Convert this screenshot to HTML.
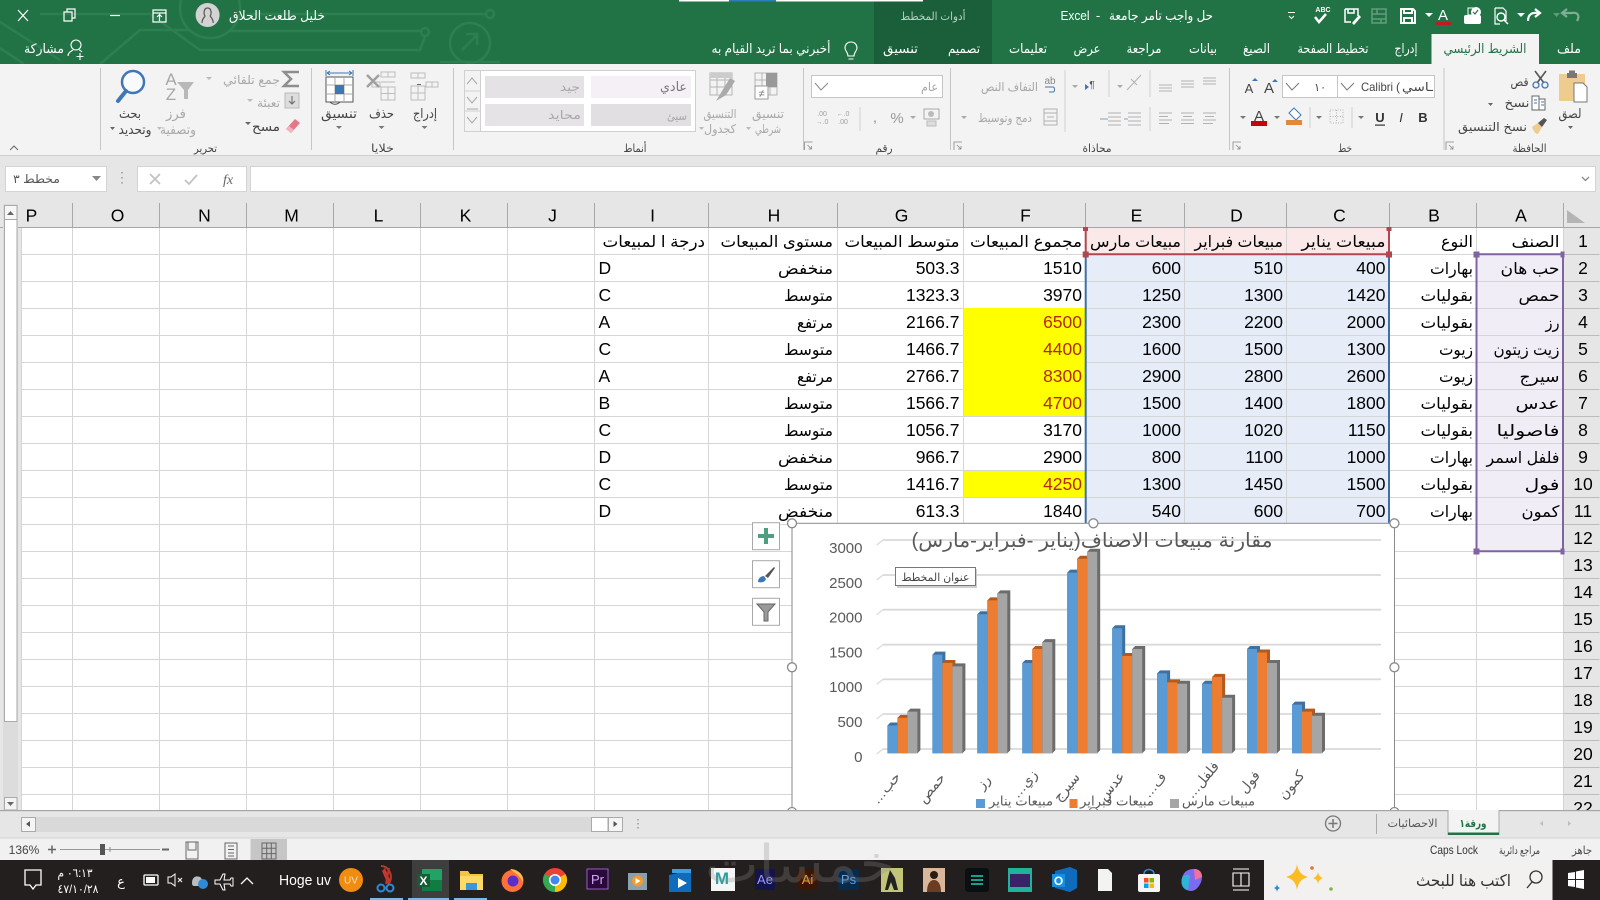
<!DOCTYPE html>
<html lang="ar"><head><meta charset="utf-8"><title>Excel</title>
<style>
html,body{margin:0;padding:0;width:1600px;height:900px;overflow:hidden;background:#e6e6e6}
svg{display:block;position:absolute;left:0;top:0}
text{font-family:"Liberation Sans","DejaVu Sans",sans-serif;fill:#000}
.m{text-anchor:middle}.e{text-anchor:end}
.w{fill:#fff}.g{fill:#a8a8a8}.d{fill:#444}
.s10{font-size:10px}.s11{font-size:11px}.s12{font-size:12px}.s13{font-size:13px}.s14{font-size:14px}.s15{font-size:15px}.s16{font-size:16px}
.n{font-size:17.5px}.a{font-size:16px}
</style></head><body>
<svg width="1600" height="900" viewBox="0 0 1600 900" xmlns="http://www.w3.org/2000/svg">
<!-- title bar -->
<rect width="1600" height="64" fill="#217346"/>
<g fill="none" stroke="#2c7f51" stroke-width="2.5">
<circle cx="210" cy="8" r="30"/><circle cx="470" cy="43" r="20"/><path d="M462 50l15-15M466 34h11v11"/>
<circle cx="490" cy="14" r="4"/><circle cx="425" cy="32" r="4"/>
<path d="M0 22L60 60M0 48L24 64M40 14H150L200 50H420L425 36M250 14H486M230 31H421M100 64L140 30H190M440 62H500"/>
</g>
<rect x="874" width="118" height="64" fill="#1a5f39"/>
<rect x="679" width="50" height="1.5" fill="#fff"/><rect x="729" width="47" height="1.5" fill="#2b7cb9"/><rect x="776" width="147" height="1.5" fill="#fff"/>
<g stroke="#fff" fill="none" stroke-width="1.2">
<path d="M18 10l10 11M28 10L18 21"/><path d="M64 12h8v9h-8zM67 12V9h8v9h-3"/><path d="M110 15.5h10"/><path d="M153 10h13v12h-13zM153 13h13M159.500 21v-6M157 17l2.500-2.500 2.500 2.500"/>
</g>
<circle cx="207.600" cy="15" r="12" fill="#d3d3d3"/><path d="M202 23c0-5 3-6 3-7-1.500-2-1.500-8 2.600-8s4 6 2.600 8c0 1 3 2 3 7" fill="none" stroke="#555" stroke-width="1.200"/>
<text x="277" y="20" class="m s13 w" textLength="96" lengthAdjust="spacingAndGlyphs">خليل طلعت الحلاق</text>
<text x="933" y="20" class="m s11" style="fill:#b6d3c3" textLength="65" lengthAdjust="spacingAndGlyphs">أدوات المخطط</text>
<text x="1075" y="20" class="m s13 w" textLength="29" lengthAdjust="spacingAndGlyphs">Excel</text><text x="1098" y="20" class="m s13 w">-</text>
<text x="1161" y="20" class="m s13 w" textLength="104" lengthAdjust="spacingAndGlyphs">حل واجب تامر جامعة</text>
<!-- QAT -->
<g fill="none" stroke="#fff" stroke-width="1.500">
<path d="M1288 12.500h7M1289 16l2.500 2.500 2.500-2.500" stroke-width="1"/>
<path d="M1315 17l4 5 7-8" stroke-width="2.500"/>
<path d="M1345 9h13v7M1345 9v13h6M1348 9v4h6V9"/><path d="M1352 23l7-8 2 2-7 8z" fill="#fff" stroke="none"/>
<g opacity=".3"><path d="M1372 9h14v14h-14zM1372 14h14M1372 19h14M1377 9v5M1381 19v4"/></g>
<path d="M1401 9h12l2 2v12h-14zM1404 9v4h8V9M1404 23v-5h8v5" stroke-width="2"/>
<path d="M1495 8h8l3 3v10M1495 8v16h5M1495 8" stroke-width="1.200"/><circle cx="1501" cy="17" r="4" stroke-width="1.400"/><path d="M1504 20l4 4"/>
<path d="M1528 21c0-7 4-9 12-8M1535 9l5 4-5 4" stroke-width="2.200"/>
<path d="M1577 21c3-5 1-9-5-8h-9M1567 9l-5 4 5 4" stroke="#7fae94" stroke-width="2.200"/>
</g>
<text x="1323" y="12" class="m" style="font-size:7px;font-weight:bold;fill:#fff">ABC</text>
<path d="M1425 13h8l-4 4zM1517 13h8l-4 4z" fill="#fff"/><path d="M1553 13h7l-3.500 4z" fill="#5f9a7c"/>
<text x="1443" y="20" class="m" style="font-size:15px;fill:#fff">A</text><rect x="1436" y="22" width="15" height="3" rx="1" fill="#c8171f"/>
<rect x="1464" y="15" width="17" height="9" rx="2" fill="#fff"/><rect x="1468" y="8" width="9" height="7" fill="none" stroke="#fff"/><circle cx="1476" cy="12" r="5" fill="#fff"/><path d="M1473 12l2 2 3-4" stroke="#217346" fill="none" stroke-width="1.200"/>
<!-- tabs -->
<rect x="1431.500" y="34" width="107.500" height="30" fill="#f3f3f3"/>
<g class="s12">
<text x="1569" y="53" class="m s13 w" textLength="24" lengthAdjust="spacingAndGlyphs">ملف</text>
<text x="1485" y="53" class="m s13" style="fill:#217346" textLength="83" lengthAdjust="spacingAndGlyphs">الشريط الرئيسي</text>
<text x="1406" y="53" class="m s13 w" textLength="23" lengthAdjust="spacingAndGlyphs">إدراج</text>
<text x="1333" y="53" class="m s13 w" textLength="71" lengthAdjust="spacingAndGlyphs">تخطيط الصفحة</text>
<text x="1256.500" y="53" class="m s13 w" textLength="27" lengthAdjust="spacingAndGlyphs">الصيغ</text>
<text x="1203" y="53" class="m s13 w" textLength="28" lengthAdjust="spacingAndGlyphs">بيانات</text>
<text x="1144" y="53" class="m s13 w" textLength="35" lengthAdjust="spacingAndGlyphs">مراجعة</text>
<text x="1087" y="53" class="m s13 w" textLength="27" lengthAdjust="spacingAndGlyphs">عرض</text>
<text x="1028" y="53" class="m s13 w" textLength="38" lengthAdjust="spacingAndGlyphs">تعليمات</text>
<text x="964" y="53" class="m s13 w" textLength="32" lengthAdjust="spacingAndGlyphs">تصميم</text>
<text x="900.500" y="53" class="m s13 w" textLength="35" lengthAdjust="spacingAndGlyphs">تنسيق</text>
<text x="771" y="53" class="m s13 w" textLength="119" lengthAdjust="spacingAndGlyphs">أخبرني بما تريد القيام به</text>
<text x="44" y="53" class="m s13 w" textLength="40" lengthAdjust="spacingAndGlyphs">مشاركة</text>
</g>
<g fill="none" stroke="#fff" stroke-width="1.100">
<path d="M851 42c-4 0-6 3-6 6 0 3 3 4 3 8h6c0-4 3-5 3-8 0-3-2-6-6-6zM848.500 59h5"/>
<circle cx="76" cy="45" r="5"/><path d="M68 56c0-4 4-5 5-6M79 50c1 0 2 1 3 2M80 53v7M76.500 56.500h7"/>
</g>
<!-- ribbon -->
<rect y="64" width="1600" height="91" fill="#f3f3f3"/>
<rect y="155" width="1600" height="47" fill="#e6e6e6"/><rect y="155" width="1600" height="1" fill="#cfcfcf"/>
<path d="M1444 68v82M1229.500 68v82M950.500 68v82M803.500 68v82M453.500 68v82M311.500 68v82M100.500 68v82" stroke="#c6c6c6"/>
<g class="s11">
<text x="1529.500" y="152" class="m s11 d" textLength="34" lengthAdjust="spacingAndGlyphs">الحافظة</text>
<text x="1345" y="152" class="m s11 d" textLength="14" lengthAdjust="spacingAndGlyphs">خط</text>
<text x="1097" y="152" class="m s11 d" textLength="29" lengthAdjust="spacingAndGlyphs">محاذاة</text>
<text x="884" y="152" class="m s11 d" textLength="17" lengthAdjust="spacingAndGlyphs">رقم</text>
<text x="635" y="152" class="m s11 d" textLength="23" lengthAdjust="spacingAndGlyphs">أنماط</text>
<text x="382.500" y="152" class="m s11 d" textLength="23" lengthAdjust="spacingAndGlyphs">خلايا</text>
<text x="205.500" y="152" class="m s11 d" textLength="23" lengthAdjust="spacingAndGlyphs">تحرير</text>
</g>
<!-- launchers -->
<g fill="none" stroke="#888" stroke-width=".8"><path d="M1446 150v-8h8M1449 145l4 4M1453 146v3h-3M1233 150v-8h8M1236 145l4 4M1240 146v3h-3M954 150v-8h8M957 145l4 4M961 146v3h-3M804.500 150v-8h8M807.500 145l4 4M811.500 146v3h-3"/></g>
<path d="M10 150l4-4 4 4" fill="none" stroke="#666"/>
<!-- clipboard -->
<rect x="1559" y="74" width="26" height="27" rx="1" fill="#eecb8f"/><rect x="1567" y="73" width="10" height="5" fill="#777"/><rect x="1569" y="70.500" width="6" height="4" fill="#777"/>
<path d="M1574 83h9l4 4v15h-13z" fill="#fff" stroke="#777"/>
<text x="1570" y="118" class="m s13 d" textLength="23" lengthAdjust="spacingAndGlyphs">لصق</text><path d="M1568 126h5l-2.500 3z" fill="#666"/>
<path d="M1535 71l9 12M1546 71l-9 12" stroke="#555" stroke-width="1.600"/><circle cx="1536" cy="85" r="3" fill="none" stroke="#3e77b4" stroke-width="1.300"/><circle cx="1545" cy="85" r="3" fill="none" stroke="#3e77b4" stroke-width="1.300"/>
<text x="1519.500" y="86" class="m s12 d" textLength="18" lengthAdjust="spacingAndGlyphs">قص</text>
<path d="M1532 96h7v14h-7zM1539 99h6v11h-6" fill="#fff" stroke="#666"/><path d="M1534 100h3M1534 103h3M1541 102h3M1541 105h3" stroke="#3e77b4"/>
<text x="1517" y="107" class="m s12 d" textLength="25" lengthAdjust="spacingAndGlyphs">نسخ</text><path d="M1488 103h5l-2.500 3z" fill="#666"/>
<path d="M1532 127l6-4 4 4-4 7c-3 0-5-4-6-7z" fill="#eecb8f"/><path d="M1538 123l4 4 5-7-3-2z" fill="#555"/>
<text x="1492.500" y="131" class="m s12 d" textLength="69" lengthAdjust="spacingAndGlyphs">نسخ التنسيق</text>
<!-- font -->
<rect x="1337.500" y="75.500" width="97" height="22" fill="#fff" stroke="#c6c6c6"/><rect x="1282.500" y="75.500" width="55" height="22" fill="#fff" stroke="#c6c6c6"/>
<path d="M1341 83l6 7 7-7M1286 83l6 7 7-7" fill="none" stroke="#777"/>
<text x="1361" y="91" class="s12 d" textLength="32" lengthAdjust="spacingAndGlyphs">Calibri</text><text x="1396" y="91" class="s12 d">(</text>
<text x="1433" y="91" class="e s12 d" textLength="31" lengthAdjust="spacingAndGlyphs">ـاسي</text>
<text x="1326" y="91" class="e s11 d">١٠</text>
<text x="1249" y="93" class="m s13 d">A</text><path d="M1252 81l3-3 3 3z" fill="#3e77b4"/>
<text x="1269" y="93" class="m" style="font-size:15px;fill:#444">A</text><path d="M1272 79l3 3 3-3z" fill="#3e77b4" transform="rotate(180 1275 80.500)"/>
<text x="1423" y="122" class="m s13" style="font-weight:bold;fill:#333">B</text>
<text x="1401" y="122" class="m s13" style="font-style:italic;fill:#333">I</text>
<text x="1380" y="122" class="m s13" style="font-weight:bold;fill:#333">U</text><rect x="1375" y="124.500" width="10" height="1.200" fill="#333"/>
<path d="M1358 116h6l-3 3zM1316 116h6l-3 3zM1274 116h6l-3 3zM1240 116h6l-3 3z" fill="#777"/>
<path d="M1352 107v21M1310 107v21" stroke="#cfcfcf"/>
<rect x="1330" y="110" width="13" height="13" fill="none" stroke="#b5b5b5" stroke-dasharray="1 1.500"/><path d="M1336.500 110v13M1330 116.500h13" stroke="#b5b5b5" stroke-dasharray="1 1.500"/>
<path d="M1294 108l7 7-5 5-7-7z" fill="#fff" stroke="#3e77b4"/><rect x="1286" y="120" width="16" height="5" fill="#de8a3a"/>
<text x="1259" y="121" class="m s15" style="fill:#444">A</text><rect x="1251" y="121" width="16" height="5" fill="#c8000b"/>
<!-- alignment -->
<g stroke="#b2b2b2" fill="none">
<path d="M1203 78h13M1203 81h13M1203 84h13M1181 81h13M1181 84h13M1181 87h13M1159 85h13M1159 88h13M1159 91h13"/>
<path d="M1150 70v27M1109 70v27M1065 70v62M1150 107v24M860 107v24" stroke="#d2d2d2"/>
<path d="M1203 113h13M1205 116.500h9M1203 120h13M1203 123.500h10M1181 113h13M1183 116.500h9M1181 120h13M1181 123.500h13M1159 113h13M1159 116.500h9M1159 120h13M1159 123.500h10"/>
<path d="M1128 113h13M1128 117h13M1128 121h13M1128 125h13M1108 113h13M1108 117h13M1108 121h13M1108 125h13"/>
<path d="M1128 119h-4M1100 119h8" stroke="#7aa5cf"/>
<path d="M1044 109h13v16h-13zM1044 113h13M1044 121h13M1047 117h7"/>
<path d="M1127 90l14-15M1131 79l6 6"/>
</g>
<text x="1050" y="84" class="m s10" style="fill:#888">ab</text><path d="M1045 87h8c2 0 2 5 0 5h-4" fill="none" stroke="#3e77b4"/>
<text x="1009.500" y="91" class="m s12 g" textLength="57" lengthAdjust="spacingAndGlyphs">التفاف النص</text>
<text x="1005" y="122" class="m s12 g" textLength="54" lengthAdjust="spacingAndGlyphs">دمج وتوسيط</text>
<text x="1092" y="88" class="m s10" style="fill:#555">¶</text><path d="M1085 84l4 3-4 3z" fill="#3e77b4"/>
<path d="M1072 85h6l-3 3zM1117 85h6l-3 3zM961 116h6l-3 3zM910 116h6l-3 3z" fill="#aaa"/>
<!-- number -->
<rect x="811.500" y="75.500" width="131" height="22" fill="#fff" stroke="#c6c6c6"/><path d="M815 83l6 7 7-7" fill="none" stroke="#888"/>
<text x="938" y="91" class="e s12 g" textLength="17" lengthAdjust="spacingAndGlyphs">عام</text>
<rect x="924" y="109" width="15" height="10" fill="none" stroke="#aaa"/><circle cx="931" cy="114" r="3" fill="#bbb"/><path d="M927 121h9v5h-9z" fill="#ddd" stroke="#bbb"/>
<text x="897" y="123" class="m s15" style="fill:#9a9a9a">%</text><text x="875" y="122" class="m s14" style="fill:#888">,</text>
<text x="843" y="116" class="m" style="font-size:7px;fill:#a0a0a0">←.0</text><text x="843" y="124" class="m" style="font-size:7px;fill:#a0a0a0">.00</text>
<text x="822" y="116" class="m" style="font-size:7px;fill:#a0a0a0">.00</text><text x="822" y="124" class="m" style="font-size:7px;fill:#a0a0a0">→.0</text>
<!-- styles -->
<g fill="none" stroke="#b5b5b5"><path d="M755 73h22v22h-22zM755 80h22M755 87h22M762 73v22M770 73v22"/><path d="M710 73h22v22h-22zM710 80h22M710 87h22M717 73v22M725 73v22"/></g>
<rect x="766" y="73" width="11" height="14" fill="#999"/><rect x="755" y="86" width="13" height="13" fill="#fff" stroke="#999"/><text x="761.500" y="97" class="m s11" style="fill:#777">≠</text>
<rect x="710" y="73" width="22" height="5" fill="#ccc"/><path d="M716 101l6-10 8-13 5 3-9 14z" fill="#aaa"/>
<text x="768" y="118" class="m s12 g" textLength="32" lengthAdjust="spacingAndGlyphs">تنسيق</text><text x="768" y="133" class="m s12 g" textLength="26" lengthAdjust="spacingAndGlyphs">شرطي</text>
<text x="720" y="118" class="m s12 g" textLength="33" lengthAdjust="spacingAndGlyphs">التنسيق</text><text x="720" y="133" class="m s12 g" textLength="32" lengthAdjust="spacingAndGlyphs">كجدول</text>
<path d="M746 127h5l-2.500 3zM699 127h5l-2.500 3z" fill="#bbb"/>
<rect x="464.500" y="70.500" width="231" height="61" fill="#fff" stroke="#d0d0d0"/><rect x="465" y="71" width="15" height="60" fill="#f3f3f3"/><path d="M480.500 71v60M465 91h15M465 111h15" stroke="#d0d0d0"/>
<path d="M467 84l5-6 5 6M467 97l5 6 5-6M467 117l5 6 5-6" fill="none" stroke="#a8a8a8"/><path d="M467 109h11" stroke="#a8a8a8"/>
<rect x="485" y="76" width="99" height="22" fill="#e4e2e4"/><rect x="591" y="76" width="100" height="22" fill="#f5f0f5"/><rect x="485" y="104" width="99" height="22" fill="#e5e3e5"/><rect x="591" y="104" width="100" height="22" fill="#e1dfe1"/>
<text x="580" y="91" class="e s12 g" textLength="20" lengthAdjust="spacingAndGlyphs">جيد</text><text x="687" y="91" class="e s13" style="fill:#777" textLength="27" lengthAdjust="spacingAndGlyphs">عادي</text>
<text x="581" y="119" class="e s12 g" textLength="33" lengthAdjust="spacingAndGlyphs">محايد</text><text x="687" y="120" class="e s12 g" textLength="20" lengthAdjust="spacingAndGlyphs">سيئ</text>
<!-- cells -->
<g fill="none" stroke="#bdbdbd"><path d="M411 73h14v5h-14zM418 73v5M411 86h14v14h-14zM411 93h14M418 86v14M426 82h12v5h-12zM432 82v5"/><path d="M372 82h8v5h-8zM381 72h14v5h-14zM388 72v5M381 87h14v13h-14zM381 93.500h14M388 87v13M381 82h14"/></g>
<path d="M421 84.500h-4" stroke="#666"/><path d="M367 75l12 12M379 75l-12 12" stroke="#a0a0a0" stroke-width="2.500"/>
<rect x="326" y="77" width="27" height="25" fill="#fff" stroke="#555"/><path d="M326 85h27M326 94h27M335 77v25M344 77v25" stroke="#aaa"/><rect x="335" y="85" width="9" height="9" fill="#3e77b4"/><path d="M327 73h25M327 73l3-2M327 73l3 2M352 73l-3-2M352 73l-3 2M326 70v6M353 70v6" stroke="#3e77b4" fill="none"/><path d="M330 102c3 3 7 3 10 0" stroke="#555" fill="none"/>
<text x="425" y="118" class="m s13 d" textLength="24" lengthAdjust="spacingAndGlyphs">إدراج</text><text x="381.500" y="118" class="m s13 d" textLength="25" lengthAdjust="spacingAndGlyphs">حذف</text><text x="339" y="118" class="m s13 d" textLength="36" lengthAdjust="spacingAndGlyphs">تنسيق</text>
<path d="M421.500 126h6l-3 3zM378.500 126h6l-3 3zM336 126h6l-3 3z" fill="#777"/>
<!-- editing -->
<circle cx="133" cy="82" r="11" fill="#f8fafc" stroke="#3e77b4" stroke-width="2.500"/><path d="M126 91l-8 10" stroke="#3e77b4" stroke-width="4" stroke-linecap="round"/>
<text x="130" y="118" class="m s13 d" textLength="22" lengthAdjust="spacingAndGlyphs">بحث</text><text x="135" y="134" class="m s13 d" textLength="33" lengthAdjust="spacingAndGlyphs">وتحديد</text><path d="M110 127h5l-2.500 3z" fill="#666"/>
<text x="171" y="85" class="m g" style="font-size:17px">A</text><text x="171" y="100" class="m g" style="font-size:17px">Z</text><path d="M177 82h17l-6 8v9h-4v-9z" fill="#b8b8b8"/>
<text x="176" y="118" class="m s13 g" textLength="20" lengthAdjust="spacingAndGlyphs">فرز</text><text x="178" y="134" class="m s13 g" textLength="36" lengthAdjust="spacingAndGlyphs">وتصفية</text><path d="M157 127h5l-2.500 3z" fill="#bbb"/>
<path d="M299 72h-15l7 7-7 7h15" fill="none" stroke="#8e8e8e" stroke-width="2.500"/>
<text x="280" y="84" class="e s12 g" textLength="57" lengthAdjust="spacingAndGlyphs">جمع تلقائي</text><path d="M206 77h6l-3 3zM247 99h6l-3 3z" fill="#bbb"/>
<rect x="285" y="93" width="14" height="15" fill="#ddd" stroke="#bbb"/><path d="M292 96v8M289 101l3 3 3-3" stroke="#666" fill="none"/>
<text x="280" y="107" class="e s12 g" textLength="23" lengthAdjust="spacingAndGlyphs">تعبئة</text>
<path d="M286 129l9-10 5 4-9 10z" fill="#e8768a"/><path d="M286 129l5 4 3-3-5-4z" fill="#f1b4bf"/>
<text x="280" y="131" class="e s13 d" textLength="28" lengthAdjust="spacingAndGlyphs">مسح</text><path d="M245 122h6l-3 3z" fill="#666"/>
<!-- formula bar -->
<rect x="5.500" y="166.500" width="101" height="25" fill="#fff" stroke="#d4d4d4"/><rect x="137.500" y="166.500" width="109" height="25" fill="#fff" stroke="#d4d4d4"/><rect x="250.500" y="166.500" width="1345" height="25" fill="#fff" stroke="#d4d4d4"/>
<text x="60" y="183" class="e s12" style="fill:#555" textLength="47" lengthAdjust="spacingAndGlyphs">مخطط ٣</text><path d="M92 176h9l-4.500 5z" fill="#888"/>
<path d="M122 172v1.500M122 177v1.500M122 182v1.500" stroke="#999" stroke-width="1.500"/>
<path d="M150 174l10 10M160 174l-10 10M185 180l4 4 8-9" fill="none" stroke="#c2c2c2" stroke-width="1.800"/>
<text x="228" y="184" class="m s14" style="font-family:'Liberation Serif',serif;font-style:italic;fill:#666">fx</text>
<path d="M1582 177l3.500 3.500 3.500-3.500" fill="none" stroke="#888" stroke-width="1.300"/>
<!-- grid -->
<rect y="202" width="1600" height="25" fill="#e6e6e6"/><rect x="1563" y="202" width="37" height="608" fill="#e6e6e6"/>
<rect x="0" y="202" width="21.500" height="608" fill="#e6e6e6"/>
<rect x="21.500" y="227.500" width="1541.500" height="583" fill="#fff"/>
<!-- fills -->
<rect x="1085.700" y="227.500" width="303.300" height="27" fill="#fbe9e9"/><rect x="1085.700" y="254.300" width="303.300" height="270" fill="#e6edf8"/>
<rect x="1476" y="254.300" width="87" height="297" fill="#f1edf7"/>
<path d="M963.500 308.300h122v108h-122zM963.500 470.300h122v27h-122z" fill="#ff0"/>
<g stroke="#d4d4d4" fill="none" opacity=".95">
<path d="M21.500 254.500H1563M21.500 281.500H1563M21.500 308.500H1563M21.500 335.500H1563M21.500 362.500H1563M21.500 389.500H1563M21.500 416.500H1563M21.500 443.500H1563M21.500 470.500H1563M21.500 497.500H1563M21.500 524.500H1563M21.500 551.500H1563M21.500 578.500H1563M21.500 605.500H1563M21.500 632.500H1563M21.500 659.500H1563M21.500 686.500H1563M21.500 713.500H1563M21.500 740.500H1563M21.500 767.500H1563M21.500 794.500H1563"/>
<path d="M21.500 227V810M72.500 227V810M159.500 227V810M246.500 227V810M333.500 227V810M420.500 227V810M507.500 227V810M594.500 227V810M708.500 227V810M837.500 227V810M963.500 227V810M1085.500 227V810M1184.500 227V810M1286.500 227V810M1389.500 227V810M1476.500 227V810M1563.500 227V810"/>
</g>
<path d="M963.500 308.500h122M963.500 335.500h122M963.500 362.500h122M963.500 389.500h122" stroke="#ff0"/>
<path d="M0 227.500H1600" stroke="#a6a6a6"/>
<path d="M72.500 203V227M159.500 203V227M246.500 203V227M333.500 203V227M420.500 203V227M507.500 203V227M594.500 203V227M708.500 203V227M837.500 203V227M963.500 203V227M1085.500 203V227M1184.500 203V227M1286.500 203V227M1389.500 203V227M1476.500 203V227M1563.500 203V227" stroke="#a8a8a8"/>
<path d="M1563.500 254.500h36M1563.500 281.500h36M1563.500 308.500h36M1563.500 335.500h36M1563.500 362.500h36M1563.500 389.500h36M1563.500 416.500h36M1563.500 443.500h36M1563.500 470.500h36M1563.500 497.500h36M1563.500 524.500h36M1563.500 551.500h36M1563.500 578.500h36M1563.500 605.500h36M1563.500 632.500h36M1563.500 659.500h36M1563.500 686.500h36M1563.500 713.500h36M1563.500 740.500h36M1563.500 767.500h36M1563.500 794.500h36" stroke="#bdbdbd"/>
<path d="M1567 210l18 13h-18z" fill="#b4b4b4"/>
<!-- selection borders -->
<path d="M1085.700 255V524M1389 255V524" stroke="#3f6fa5" stroke-width="2"/>
<path d="M1085.700 229V254M1389 229V254M1085.700 254.300H1389" stroke="#b0474f" stroke-width="2"/>
<path d="M1083 227h5v4h-5zM1386.500 227h5v4h-5zM1082.700 251.500h6v6h-6zM1386 251.500h6v6h-6z" fill="#b0474f"/>
<path d="M1476.500 254.300V551.300H1563V254.300M1476.500 254.300H1563" fill="none" stroke="#8064a2" stroke-width="2"/>
<path d="M1473.500 251.500h6v6h-6zM1560.500 251.500h4v6h-4zM1473.500 548.500h6v6h-6zM1560.500 548.500h4v6h-4z" fill="#8064a2"/>
<!-- column letters -->
<g transform="translate(1.500 0)" style="fill:#333">
<text x="30" y="221.700" class="m n">P</text><text x="116" y="221.700" class="m n">O</text><text x="203" y="221.700" class="m n">N</text><text x="290" y="221.700" class="m n">M</text><text x="377" y="221.700" class="m n">L</text><text x="464" y="221.700" class="m n">K</text><text x="551" y="221.700" class="m n">J</text><text x="651" y="221.700" class="m n">I</text><text x="772.500" y="221.700" class="m n">H</text><text x="900" y="221.700" class="m n">G</text><text x="1024" y="221.700" class="m n">F</text><text x="1135" y="221.700" class="m n">E</text><text x="1235" y="221.700" class="m n">D</text><text x="1338" y="221.700" class="m n">C</text><text x="1432.500" y="221.700" class="m n">B</text><text x="1519.500" y="221.700" class="m n">A</text>
</g>
<g transform="translate(0 -.8)">
<!-- row numbers -->
<text x="1583" y="248" class="m n">1</text><text x="1583" y="275" class="m n">2</text><text x="1583" y="302" class="m n">3</text><text x="1583" y="329" class="m n">4</text><text x="1583" y="356" class="m n">5</text><text x="1583" y="383" class="m n">6</text><text x="1583" y="410" class="m n">7</text><text x="1583" y="437" class="m n">8</text><text x="1583" y="464" class="m n">9</text><text x="1583" y="491" class="m n">10</text><text x="1583" y="518" class="m n">11</text><text x="1583" y="545" class="m n">12</text><text x="1583" y="572" class="m n">13</text><text x="1583" y="599" class="m n">14</text><text x="1583" y="626" class="m n">15</text><text x="1583" y="653" class="m n">16</text><text x="1583" y="680" class="m n">17</text><text x="1583" y="707" class="m n">18</text><text x="1583" y="734" class="m n">19</text><text x="1583" y="761" class="m n">20</text><text x="1583" y="788" class="m n">21</text><text x="1583" y="815" class="m n">22</text>
<!-- header row -->
<text x="1559.500" y="248" class="e a" textLength="48" lengthAdjust="spacingAndGlyphs">الصنف</text>
<text x="1473" y="248" class="e a" textLength="32" lengthAdjust="spacingAndGlyphs">النوع</text>
<text x="1385.500" y="248" class="e a" textLength="84" lengthAdjust="spacingAndGlyphs">مبيعات يناير</text>
<text x="1283" y="248" class="e a" textLength="88.500" lengthAdjust="spacingAndGlyphs">مبيعات فبراير</text>
<text x="1181" y="248" class="e a" textLength="91" lengthAdjust="spacingAndGlyphs">مبيعات مارس</text>
<text x="1082" y="248" class="e a" textLength="112" lengthAdjust="spacingAndGlyphs">مجموع المبيعات</text>
<text x="959.500" y="248" class="e a" textLength="115" lengthAdjust="spacingAndGlyphs">متوسط المبيعات</text>
<text x="833" y="248" class="e a" textLength="112.500" lengthAdjust="spacingAndGlyphs">مستوى المبيعات</text>
<text x="705" y="248" class="e a" textLength="102.500" lengthAdjust="spacingAndGlyphs">درجة ا لمبيعات</text>
<!-- col A -->
<text x="1559.500" y="275" class="e a" textLength="59" lengthAdjust="spacingAndGlyphs">حب هان</text>
<text x="1559.500" y="302" class="e a" textLength="41" lengthAdjust="spacingAndGlyphs">حمص</text>
<text x="1559.500" y="329" class="e a" textLength="14" lengthAdjust="spacingAndGlyphs">رز</text>
<text x="1559.500" y="356" class="e a" textLength="66" lengthAdjust="spacingAndGlyphs">زيت زيتون</text>
<text x="1559.500" y="383" class="e a" textLength="40" lengthAdjust="spacingAndGlyphs">سيرج</text>
<text x="1559.500" y="410" class="e a" textLength="44" lengthAdjust="spacingAndGlyphs">عدس</text>
<text x="1559.500" y="437" class="e a" textLength="63" lengthAdjust="spacingAndGlyphs">فاصوليا</text>
<text x="1559.500" y="464" class="e a" textLength="73" lengthAdjust="spacingAndGlyphs">فلفل اسمر</text>
<text x="1559.500" y="491" class="e a" textLength="35" lengthAdjust="spacingAndGlyphs">فول</text>
<text x="1559.500" y="518" class="e a" textLength="38" lengthAdjust="spacingAndGlyphs">كمون</text>
<!-- col B -->
<text x="1473" y="275" class="e a" textLength="43" lengthAdjust="spacingAndGlyphs">بهارات</text>
<text x="1473" y="302" class="e a" textLength="52.500" lengthAdjust="spacingAndGlyphs">بقوليات</text>
<text x="1473" y="329" class="e a" textLength="52.500" lengthAdjust="spacingAndGlyphs">بقوليات</text>
<text x="1473" y="356" class="e a" textLength="34" lengthAdjust="spacingAndGlyphs">زيوت</text>
<text x="1473" y="383" class="e a" textLength="34" lengthAdjust="spacingAndGlyphs">زيوت</text>
<text x="1473" y="410" class="e a" textLength="52.500" lengthAdjust="spacingAndGlyphs">بقوليات</text>
<text x="1473" y="437" class="e a" textLength="52.500" lengthAdjust="spacingAndGlyphs">بقوليات</text>
<text x="1473" y="464" class="e a" textLength="43" lengthAdjust="spacingAndGlyphs">بهارات</text>
<text x="1473" y="491" class="e a" textLength="52.500" lengthAdjust="spacingAndGlyphs">بقوليات</text>
<text x="1473" y="518" class="e a" textLength="43" lengthAdjust="spacingAndGlyphs">بهارات</text>
<!-- C D E -->
<text x="1385.500" y="275" class="e n">400</text><text x="1283" y="275" class="e n">510</text><text x="1181" y="275" class="e n">600</text>
<text x="1385.500" y="302" class="e n">1420</text><text x="1283" y="302" class="e n">1300</text><text x="1181" y="302" class="e n">1250</text>
<text x="1385.500" y="329" class="e n">2000</text><text x="1283" y="329" class="e n">2200</text><text x="1181" y="329" class="e n">2300</text>
<text x="1385.500" y="356" class="e n">1300</text><text x="1283" y="356" class="e n">1500</text><text x="1181" y="356" class="e n">1600</text>
<text x="1385.500" y="383" class="e n">2600</text><text x="1283" y="383" class="e n">2800</text><text x="1181" y="383" class="e n">2900</text>
<text x="1385.500" y="410" class="e n">1800</text><text x="1283" y="410" class="e n">1400</text><text x="1181" y="410" class="e n">1500</text>
<text x="1385.500" y="437" class="e n">1150</text><text x="1283" y="437" class="e n">1020</text><text x="1181" y="437" class="e n">1000</text>
<text x="1385.500" y="464" class="e n">1000</text><text x="1283" y="464" class="e n">1100</text><text x="1181" y="464" class="e n">800</text>
<text x="1385.500" y="491" class="e n">1500</text><text x="1283" y="491" class="e n">1450</text><text x="1181" y="491" class="e n">1300</text>
<text x="1385.500" y="518" class="e n">700</text><text x="1283" y="518" class="e n">600</text><text x="1181" y="518" class="e n">540</text>
<!-- F -->
<text x="1082" y="275" class="e n">1510</text><text x="1082" y="302" class="e n">3970</text>
<text x="1082" y="329" class="e n" style="fill:#b32b00">6500</text><text x="1082" y="356" class="e n" style="fill:#b32b00">4400</text><text x="1082" y="383" class="e n" style="fill:#b32b00">8300</text><text x="1082" y="410" class="e n" style="fill:#b32b00">4700</text>
<text x="1082" y="437" class="e n">3170</text><text x="1082" y="464" class="e n">2900</text><text x="1082" y="491" class="e n" style="fill:#b32b00">4250</text><text x="1082" y="518" class="e n">1840</text>
<!-- G -->
<text x="959.500" y="275" class="e n">503.3</text><text x="959.500" y="302" class="e n">1323.3</text><text x="959.500" y="329" class="e n">2166.7</text><text x="959.500" y="356" class="e n">1466.7</text><text x="959.500" y="383" class="e n">2766.7</text><text x="959.500" y="410" class="e n">1566.7</text><text x="959.500" y="437" class="e n">1056.7</text><text x="959.500" y="464" class="e n">966.7</text><text x="959.500" y="491" class="e n">1416.7</text><text x="959.500" y="518" class="e n">613.3</text>
<!-- H -->
<text x="833" y="275" class="e a" textLength="55" lengthAdjust="spacingAndGlyphs">منخفض</text>
<text x="833" y="302" class="e a" textLength="49" lengthAdjust="spacingAndGlyphs">متوسط</text>
<text x="833" y="329" class="e a" textLength="36" lengthAdjust="spacingAndGlyphs">مرتفع</text>
<text x="833" y="356" class="e a" textLength="49" lengthAdjust="spacingAndGlyphs">متوسط</text>
<text x="833" y="383" class="e a" textLength="36" lengthAdjust="spacingAndGlyphs">مرتفع</text>
<text x="833" y="410" class="e a" textLength="49" lengthAdjust="spacingAndGlyphs">متوسط</text>
<text x="833" y="437" class="e a" textLength="49" lengthAdjust="spacingAndGlyphs">متوسط</text>
<text x="833" y="464" class="e a" textLength="55" lengthAdjust="spacingAndGlyphs">منخفض</text>
<text x="833" y="491" class="e a" textLength="49" lengthAdjust="spacingAndGlyphs">متوسط</text>
<text x="833" y="518" class="e a" textLength="55" lengthAdjust="spacingAndGlyphs">منخفض</text>
<!-- I -->
<text x="598.500" y="275" class="n">D</text><text x="598.500" y="302" class="n">C</text><text x="598.500" y="329" class="n">A</text><text x="598.500" y="356" class="n">C</text><text x="598.500" y="383" class="n">A</text><text x="598.500" y="410" class="n">B</text><text x="598.500" y="437" class="n">C</text><text x="598.500" y="464" class="n">D</text><text x="598.500" y="491" class="n">C</text><text x="598.500" y="518" class="n">D</text>
</g>
<!-- chart -->
<rect x="792" y="523.300" width="602.500" height="300" fill="#fff" stroke="#8a8a8a"/>
<path d="M883 540H1381M883 575H1381M883 609.700H1381M883 644.700H1381M883 679.300H1381M883 714H1381M883 749H1381" stroke="#d9d9d9" stroke-width="1.800"/>
<path d="M876.600 545l6.400-5M876.600 580l6.400-5M876.600 614.700l6.400-5M876.600 649.700l6.400-5M876.600 684.300l6.400-5M876.600 719l6.400-5M876.600 754l6.400-5" stroke="#d9d9d9" stroke-width="1.200"/>
<g>
<text x="862.500" y="553" class="e s15" style="fill:#595959">3000</text><text x="862.500" y="588" class="e s15" style="fill:#595959">2500</text><text x="862.500" y="622.500" class="e s15" style="fill:#595959">2000</text><text x="862.500" y="657.500" class="e s15" style="fill:#595959">1500</text><text x="862.500" y="692" class="e s15" style="fill:#595959">1000</text><text x="862.500" y="727" class="e s15" style="fill:#595959">500</text><text x="862.500" y="762" class="e s15" style="fill:#595959">0</text>
</g>
<text x="1092" y="547" class="m" direction="rtl" style="font-size:20px;fill:#595959" textLength="361" lengthAdjust="spacingAndGlyphs">مقارنة مبيعات الاصناف(يناير -فبراير-مارس)</text>
<path fill="#3f709f" d="M887.400 725.500l3-3h10V750.300l-3 3h-10zM932.400 654.600l3-3h10V750.300l-3 3h-10zM977.300 614.300l3-3h10V750.300l-3 3h-10zM1022.300 663l3-3h10V750.300l-3 3h-10zM1067.200 572.600l3-3h10V750.300l-3 3h-10zM1112.200 628.200l3-3h10V750.300l-3 3h-10zM1157.100 673.400l3-3h10V750.300l-3 3h-10zM1202.100 683.800l3-3h10V750.300l-3 3h-10zM1247 649l3-3h10V750.300l-3 3h-10zM1292 704.600l3-3h10V750.300l-3 3h-10z"/>
<path fill="#5b9bd5" d="M887.400 725.500h10V753.300h-10zM932.400 654.600h10V753.300h-10zM977.300 614.300h10V753.300h-10zM1022.300 663h10V753.300h-10zM1067.200 572.600h10V753.300h-10zM1112.200 628.200h10V753.300h-10zM1157.100 673.400h10V753.300h-10zM1202.100 683.800h10V753.300h-10zM1247 649h10V753.300h-10zM1292 704.600h10V753.300h-10z"/>
<path fill="#b45a1e" d="M897.400 717.900l3-3h10V750.300l-3 3h-10zM942.400 663l3-3h10V750.300l-3 3h-10zM987.300 600.400l3-3h10V750.300l-3 3h-10zM1032.300 649l3-3h10V750.300l-3 3h-10zM1077.200 558.700l3-3h10V750.300l-3 3h-10zM1122.200 656l3-3h10V750.300l-3 3h-10zM1167.100 682.400l3-3h10V750.300l-3 3h-10zM1212.100 676.900l3-3h10V750.300l-3 3h-10zM1257 652.500l3-3h10V750.300l-3 3h-10zM1302 711.600l3-3h10V750.300l-3 3h-10z"/>
<path fill="#ed7d31" d="M897.400 717.900h10V753.300h-10zM942.400 663h10V753.300h-10zM987.300 600.400h10V753.300h-10zM1032.300 649h10V753.300h-10zM1077.200 558.700h10V753.300h-10zM1122.200 656h10V753.300h-10zM1167.100 682.400h10V753.300h-10zM1212.100 676.900h10V753.300h-10zM1257 652.500h10V753.300h-10zM1302 711.600h10V753.300h-10z"/>
<path fill="#6c6c6c" d="M907.400 711.600l3-3h10V750.300l-3 3h-10zM952.400 666.400l3-3h10V750.300l-3 3h-10zM997.300 593.400l3-3h10V750.300l-3 3h-10zM1042.300 642.100l3-3h10V750.300l-3 3h-10zM1087.200 551.700l3-3h10V750.300l-3 3h-10zM1132.200 649l3-3h10V750.300l-3 3h-10zM1177.100 683.800l3-3h10V750.300l-3 3h-10zM1222.100 697.700l3-3h10V750.300l-3 3h-10zM1267 663l3-3h10V750.300l-3 3h-10zM1312 715.800l3-3h10V750.300l-3 3h-10z"/>
<path fill="#a5a5a5" d="M907.400 711.600h10V753.300h-10zM952.400 666.400h10V753.300h-10zM997.300 593.400h10V753.300h-10zM1042.300 642.100h10V753.300h-10zM1087.200 551.700h10V753.300h-10zM1132.200 649h10V753.300h-10zM1177.100 683.800h10V753.300h-10zM1222.100 697.700h10V753.300h-10zM1267 663h10V753.300h-10zM1312 715.800h10V753.300h-10z"/>
<!-- category labels -->
<g>
<text class="m s14" direction="rtl" style="fill:#595959" transform="translate(889.500 791) rotate(-50)">حب…</text>
<text class="m s14" style="fill:#595959" transform="translate(935 791) rotate(-50)">حمص</text>
<text class="m s14" style="fill:#595959" transform="translate(987 785) rotate(-50)">رز</text>
<text class="m s14" direction="rtl" style="fill:#595959" transform="translate(1028 787) rotate(-50)">زي…</text>
<text class="m s14" style="fill:#595959" transform="translate(1070 790) rotate(-50)">سيرج</text>
<text class="m s14" style="fill:#595959" transform="translate(1115 789) rotate(-50)">عدس</text>
<text class="m s14" direction="rtl" style="fill:#595959" transform="translate(1158 788) rotate(-50)">ف…</text>
<text class="m s14" direction="rtl" style="fill:#595959" transform="translate(1206 783) rotate(-50)">فلفل…</text>
<text class="m s14" style="fill:#595959" transform="translate(1253 785) rotate(-50)">فول</text>
<text class="m s14" style="fill:#595959" transform="translate(1295 788) rotate(-50)">كمون</text>
</g>
<rect x="976" y="799" width="9" height="9" fill="#5b9bd5"/><rect x="1069.500" y="799" width="8" height="9" fill="#ed7d31"/><rect x="1170" y="799" width="9" height="9" fill="#a5a5a5"/>
<text x="1021" y="805.500" class="m s13" style="fill:#595959" textLength="64" lengthAdjust="spacingAndGlyphs">مبيعات يناير</text>
<text x="1117" y="805.500" class="m s13" style="fill:#595959" textLength="74" lengthAdjust="spacingAndGlyphs">مبيعات فبراير</text>
<text x="1218.500" y="805.500" class="m s13" style="fill:#595959" textLength="73" lengthAdjust="spacingAndGlyphs">مبيعات مارس</text>
<!-- tooltip -->
<rect x="897" y="569" width="80" height="19" fill="#bbb" opacity=".7"/>
<rect x="895.500" y="567.500" width="80" height="18" fill="#fff" stroke="#777"/>
<text x="935.500" y="581" class="m s11" style="fill:#444" textLength="68" lengthAdjust="spacingAndGlyphs">عنوان المخطط</text>
<!-- chart side buttons -->
<rect x="752.500" y="522.700" width="27" height="27" fill="#fff" stroke="#a8a8a8"/><path d="M766 528v16M758 536h16" stroke="#4f9e7f" stroke-width="4"/>
<rect x="752.500" y="560.700" width="27" height="27" fill="#fff" stroke="#a8a8a8"/><path d="M758 582c0-4 3-6 6-6l2 3c-1 3-4 4-8 3z" fill="#3e77b4"/><path d="M765 576l9-9 1 1-7 10z" fill="#555"/>
<rect x="752.500" y="598.300" width="27" height="27" fill="#fff" stroke="#a8a8a8"/><path d="M757 604h18l-7 8v9h-4v-9z" fill="#9a9a9a" stroke="#666"/>
<g fill="#fff" stroke="#8a8a8a" stroke-width="1.300">
<circle cx="792" cy="523.300" r="4.500"/><circle cx="1093.400" cy="523.300" r="4.500"/><circle cx="1394.400" cy="523.300" r="4.500"/><circle cx="792" cy="667.300" r="4.500"/><circle cx="1394.400" cy="667.300" r="4.500"/><circle cx="792" cy="812" r="4.500"/><circle cx="1093.400" cy="812" r="4.500"/><circle cx="1394.400" cy="812" r="4.500"/>
</g>
<!-- v scrollbar -->
<rect x="3" y="204" width="15" height="606" fill="#dcdcdc"/>
<rect x="4.500" y="205.500" width="12.500" height="14" fill="#f7f7f7" stroke="#aaa"/><path d="M7 215l3.500-4 3.500 4z" fill="#666"/>
<rect x="4.500" y="219.500" width="12.500" height="502" fill="#fff" stroke="#aaa"/>
<rect x="4.500" y="797.500" width="12.500" height="12.500" fill="#f3f3f3" stroke="#aaa"/><path d="M7 802l3.500 4 3.500-4z" fill="#666"/>
<!-- sheet tabs bar -->
<rect y="810" width="1600" height="28" fill="#e6e6e6"/><rect y="810" width="1600" height="1.200" fill="#a6a6a6"/><rect y="837.500" width="1600" height="1" fill="#d2d2d2"/>
<rect x="36" y="817" width="555" height="15" fill="#d9d9d9"/>
<rect x="21.500" y="817.500" width="14" height="14" fill="#f5f5f5" stroke="#aaa"/><path d="M30 821v6l-4-3z" fill="#555"/>
<rect x="591.500" y="817.500" width="16.500" height="14" fill="#fff" stroke="#aaa"/><rect x="608.500" y="817.500" width="14" height="14" fill="#f5f5f5" stroke="#aaa"/><path d="M613.500 821v6l4-3z" fill="#555"/>
<path d="M638 819v1.500M638 823v1.500M638 827v1.500" stroke="#999" stroke-width="1.500"/>
<rect x="1448" y="810" width="51" height="25" fill="#f3f3f3"/><path d="M1448 810v25M1499 810v25" stroke="#aaa"/><rect x="1448" y="832.500" width="51" height="2.500" fill="#217346"/>
<text x="1473" y="827" class="m s11" style="fill:#217346;font-weight:bold" textLength="27" lengthAdjust="spacingAndGlyphs">ورقة١</text>
<text x="1412.500" y="827" class="m s11" style="fill:#555" textLength="50" lengthAdjust="spacingAndGlyphs">الاحصائيات</text>
<path d="M1376.500 814v20" stroke="#aaa"/>
<circle cx="1333" cy="823.500" r="7.500" fill="none" stroke="#777" stroke-width="1.300"/><path d="M1333 819v9M1328.500 823.500h9" stroke="#777" stroke-width="1.500"/>
<path d="M1543 821v5l-3-2.500zM1568 821v5l3-2.500z" fill="#bbb"/>
<!-- status bar -->
<rect y="838.500" width="1600" height="21.500" fill="#f1f1f1"/>
<rect x="250.500" y="839" width="36.500" height="21" fill="#c6c6c6"/>
<text x="24" y="854" class="m s12" style="fill:#444">136%</text>
<path d="M48 849.500h8M52 845.500v8" stroke="#666" stroke-width="1.500"/><path d="M60 849.500H160" stroke="#999"/><path d="M162 849.500h7" stroke="#666" stroke-width="2"/>
<rect x="100" y="844" width="5" height="11" fill="#555"/><path d="M110 847v5" stroke="#888"/>
<path d="M186 842h12v17h-12zM188 842v8h8v-8M188 842" fill="none" stroke="#666"/>
<path d="M225 843h12v16h-12zM228 846h6M228 849.500h6M228 853h6M228 856h6" fill="none" stroke="#666"/>
<path d="M262 843h14v16h-14zM262 848.300h14M262 853.600h14M266.700 843v16M271.300 843v16" fill="none" stroke="#666"/>
<text x="1592" y="854" class="e s11" style="fill:#444" textLength="20" lengthAdjust="spacingAndGlyphs">جاهز</text>
<text x="1519.500" y="854" class="m s11" style="fill:#444" textLength="41" lengthAdjust="spacingAndGlyphs">مراجع دائرية</text>
<text x="1454" y="854" class="m s12" style="fill:#333" textLength="48" lengthAdjust="spacingAndGlyphs">Caps Lock</text>
<!-- taskbar -->
<rect y="860" width="1600" height="40" fill="#231f1e"/>
<rect x="412" y="860" width="37" height="40" fill="#3e3e3e"/>
<rect x="1264" y="860" width="288.500" height="40" fill="#f2f1f0"/>
<path d="M370 898h33v2h-33zM408 898h41v2h-41zM454 898h33v2h-33z" fill="#76b9ed"/>
<path d="M25 870h16v15h-5l-3 4-3-4h-5z" fill="none" stroke="#fff" stroke-width="1.300"/>
<text x="75" y="877" class="m s12 w" textLength="35" lengthAdjust="spacingAndGlyphs">٠٦:١٣ م</text>
<text x="78" y="893" class="m s12 w" textLength="41" lengthAdjust="spacingAndGlyphs">٤٧/١٠/٢٨</text>
<text x="121" y="886" class="m s13 w">ع</text>
<rect x="144" y="875" width="14" height="10" rx="1" fill="none" stroke="#fff" stroke-width="1.300"/><rect x="146" y="877" width="9" height="6" fill="#fff"/>
<path d="M168 877h3l4-3v12l-4-3h-3zM178 878l4 4M182 878l-4 4" fill="none" stroke="#fff"/>
<path d="M192 883c0-5 3-8 8-6 3 2 3 7 0 9h-6c-1 0-2-1-2-3z" fill="#b9bcc0"/><circle cx="203" cy="884" r="5" fill="#2f8ad6"/>
<path d="M215 880h5l3-6h2l-1 6h6l1-2h2v8h-2l-1-2h-6l1 6h-2l-3-6h-5z" fill="none" stroke="#fff"/>
<path d="M241 884l6-6 6 6" fill="none" stroke="#fff" stroke-width="1.300"/>
<text x="305" y="885" class="m s15 w" textLength="52" lengthAdjust="spacingAndGlyphs">Hoge uv</text>
<circle cx="351" cy="880" r="12" fill="#f08c12"/><text x="351" y="883.500" class="m s10" style="fill:#fde3b8">UV</text>
<path d="M385 868l6 14-3 3-6-14z" fill="#c33"/><path d="M381 866c7 0 12 8 9 16M389 868l-3 16" stroke="#b23b2a" stroke-width="2" fill="none"/><circle cx="381" cy="888" r="3.500" fill="none" stroke="#2f8ad6" stroke-width="2"/><circle cx="390" cy="888" r="3.500" fill="none" stroke="#2f8ad6" stroke-width="2"/>
<!-- excel -->
<rect x="422" y="869" width="20" height="22" rx="1" fill="#21a366"/><rect x="422" y="880" width="20" height="11" fill="#107c41"/><rect x="417" y="874" width="13" height="13" fill="#185c37"/><text x="423.500" y="885" class="m s12 w" style="font-weight:bold">X</text>
<!-- folder -->
<path d="M460 871h8l2 3h13v16h-23z" fill="#f4c542"/><rect x="460" y="876" width="23" height="14" fill="#ffd966"/><rect x="466" y="883" width="11" height="7" fill="#3a96dd"/>
<!-- firefox -->
<circle cx="512.500" cy="881" r="11" fill="#ff7139"/><path d="M510 869c7 0 14 5 13 13-3-6-8-9-13-13z" fill="#ffbd4f"/><circle cx="513" cy="881" r="5.500" fill="#5b2ecc"/>
<!-- chrome -->
<circle cx="555" cy="880" r="12" fill="#ea4335"/><path d="M555 880L544.600 874A12 12 0 0 0 555 892z" fill="#34a853"/><path d="M555 880L565.400 874A12 12 0 0 1 555 892z" fill="#fbbc05"/><circle cx="555" cy="880" r="6" fill="#fff"/><circle cx="555" cy="880" r="4.500" fill="#4285f4"/>
<!-- pr etc -->
<rect x="587" y="869" width="21" height="20" fill="#2a0a3a" stroke="#9a5bd0"/><text x="597.500" y="884" class="m s13" style="fill:#d8a6ff">Pr</text>
<rect x="628" y="873" width="19" height="17" fill="#8aa0ad"/><circle cx="637.500" cy="881" r="5.500" fill="#f39a2e"/><path d="M635.500 878l5 3-5 3z" fill="#fff"/>
<path d="M669 875l22-5v22h-22z" fill="#0f6cbd"/><rect x="672" y="869" width="19" height="4" fill="#3aa0e6"/><path d="M678 878l9 5-9 5z" fill="#fff"/>
<rect x="711" y="868" width="24" height="23" fill="#f5f5f5"/><text x="722" y="884" class="m" style="font-size:17px;font-weight:bold;fill:#27a0a0">M</text>
<rect x="755" y="869" width="20" height="21" rx="2" fill="#14144a"/><text x="765" y="884" class="m s13" style="fill:#9a9aff">Ae</text>
<rect x="798" y="869" width="19" height="21" rx="2" fill="#3b1505"/><text x="807.500" y="884" class="m s13" style="fill:#ff9a00">Ai</text>
<rect x="838" y="869" width="21" height="21" rx="2" fill="#0a2a4a"/><text x="848.500" y="884" class="m s13" style="fill:#4aa8ff">Ps</text>
<rect x="881" y="868" width="22" height="24" fill="#c2c47a"/><path d="M890 870l5 8 3 12h-4l-3-8-3 8h-3l3-13z" fill="#222"/>
<rect x="923" y="868" width="22" height="24" fill="#d8b79a"/><path d="M927 892c0-8 3-12 7-12s7 4 7 12z" fill="#6a3c22"/><circle cx="934" cy="875" r="4" fill="#2a1a12"/>
<rect x="965" y="868" width="24" height="24" rx="3" fill="#0a0f12"/><path d="M971 876h12M971 880h12M971 884h12" stroke="#20d0b0" stroke-width="1.500"/>
<rect x="1008" y="868" width="24" height="24" fill="#1fb39a"/><rect x="1010" y="874" width="20" height="13" fill="#3a2268"/>
<path d="M1055 871l15-4 7 3v18l-7 4-15-4z" fill="#0f6cbd"/><rect x="1052" y="874" width="13" height="13" fill="#1490df"/><text x="1058.500" y="885" class="m s12 w" style="font-weight:bold">O</text>
<path d="M1098 869h10l4 4v18h-14z" fill="#f3f3f3"/>
<rect x="1138" y="874" width="22" height="18" rx="2" fill="#f5f5f5"/><path d="M1144 874c0-6 10-6 10 0" fill="none" stroke="#2f8ad6" stroke-width="1.500"/><rect x="1144" y="878" width="4.500" height="4.500" fill="#f25022"/><rect x="1149.500" y="878" width="4.500" height="4.500" fill="#7fba00"/><rect x="1144" y="883.500" width="4.500" height="4.500" fill="#00a4ef"/><rect x="1149.500" y="883.500" width="4.500" height="4.500" fill="#ffb900"/>
<path d="M1182 878c2-8 8-9 12-9 6 0 8 4 8 8 0 6-5 14-11 14-5 0-11-4-9-13z" fill="#7a6cf0"/><path d="M1182 878c2-4 6-4 8-2l-2 14c-4 0-8-5-6-12z" fill="#2fb4d8"/><path d="M1194 869c6 0 8 4 8 8l-7 3z" fill="#f2709c"/>
<path d="M1233 869h16M1233 890h16M1233 873h16v13h-16zM1241 873v13" fill="none" stroke="#fff" stroke-width="1.100"/>
<path d="M1297 864c1 7 4 11 11 13-7 2-10 6-11 13-1-7-4-11-11-13 7-2 10-6 11-13z" fill="#fbbc24"/>
<path d="M1318 872c.5 3 2 5 5 6-3 1-4.500 3-5 6-.5-3-2-5-5-6 3-1 4.500-3 5-6z" fill="#fbbc24"/>
<path d="M1277 884c.3 2 1 3 3 4-2 1-2.700 2-3 4-.3-2-1-3-3-4 2-1 2.700-2 3-4z" fill="#2f8ad6"/><circle cx="1312" cy="868" r="1.800" fill="#e8742a"/><circle cx="1331" cy="889" r="1.800" fill="#76b947"/>
<text x="1463.500" y="886" class="m s16" style="fill:#333" textLength="95" lengthAdjust="spacingAndGlyphs">اكتب هنا للبحث</text>
<circle cx="1536" cy="877" r="6" fill="none" stroke="#333" stroke-width="1.300"/><path d="M1532 882l-5 6" stroke="#333" stroke-width="1.300"/>
<path d="M1568 873l7-1v7h-7zM1576 871.500l8-1.500v9h-8zM1568 880h7v7l-7-1zM1576 880h8v9l-8-1.500z" fill="#fff"/>
<!-- watermark -->
<text x="800" y="882" class="m" style="font-size:52px;fill:#8c8c8c;opacity:.28" textLength="190" lengthAdjust="spacingAndGlyphs">خمسات</text>
</svg>
</body></html>
